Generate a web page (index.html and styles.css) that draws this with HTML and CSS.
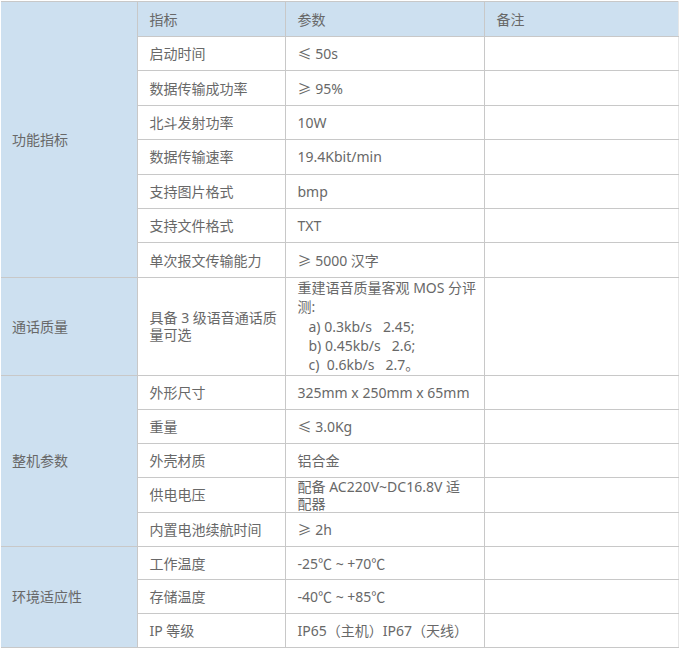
FILE: index.html
```html
<!DOCTYPE html>
<html lang="zh">
<head>
<meta charset="utf-8">
<link rel="stylesheet" href="styles.css">
</head>
<body>
<table class="spec">
  <colgroup>
    <col class="c1"><col class="c2"><col class="c3"><col class="c4">
  </colgroup>
  <tr class="head">
    <td class="group" rowspan="8">功能指标</td>
    <td class="th">指标</td><td class="th">参数</td><td class="th">备注</td>
  </tr>
  <tr class="r1"><td>启动时间</td><td><span class="sym">≤</span> 50s</td><td></td></tr>
  <tr class="r1"><td>数据传输成功率</td><td><span class="sym">≥</span> 95%</td><td></td></tr>
  <tr class="r1"><td>北斗发射功率</td><td>10W</td><td></td></tr>
  <tr class="r1"><td>数据传输速率</td><td>19.4Kbit/min</td><td></td></tr>
  <tr class="r1"><td>支持图片格式</td><td>bmp</td><td></td></tr>
  <tr class="r1"><td>支持文件格式</td><td>TXT</td><td></td></tr>
  <tr class="r1"><td>单次报文传输能力</td><td><span class="sym">≥</span> 5000 汉字</td><td></td></tr>
  <tr class="call">
    <td class="group">通话质量</td>
    <td class="wrap">具备 3 级语音通话质<br>量可选</td>
    <td class="mos">
      <div>重建语音质量客观 MOS 分评<br>测:</div>
      <div class="ind">a) 0.3kb/s &nbsp; 2.45;</div>
      <div class="ind">b) 0.45kb/s &nbsp; 2.6;</div>
      <div class="ind">c) &nbsp;0.6kb/s &nbsp; 2.7。</div>
    </td>
    <td></td>
  </tr>
  <tr class="r2">
    <td class="group" rowspan="5">整机参数</td>
    <td>外形尺寸</td><td>325mm x 250mm x 65mm</td><td></td>
  </tr>
  <tr class="r2"><td>重量</td><td><span class="sym">≤</span> 3.0Kg</td><td></td></tr>
  <tr class="r2"><td>外壳材质</td><td>铝合金</td><td></td></tr>
  <tr class="r2"><td>供电电压</td><td class="wrap">配备 AC220V~DC16.8V 适<br>配器</td><td></td></tr>
  <tr class="r2"><td>内置电池续航时间</td><td><span class="sym">≥</span> 2h</td><td></td></tr>
  <tr class="r3">
    <td class="group" rowspan="3">环境适应性</td>
    <td>工作温度</td><td>-25<span class="sym">℃</span> ~ +70<span class="sym">℃</span></td><td></td>
  </tr>
  <tr class="r3"><td>存储温度</td><td>-40<span class="sym">℃</span> ~ +85<span class="sym">℃</span></td><td></td></tr>
  <tr class="r3"><td>IP 等级</td><td>IP65（主机）IP67（天线）</td><td></td></tr>
</table>
</body>
</html>
```

FILE: styles.css
```css
html, body {
  margin: 0;
  padding: 0;
  background: #ffffff;
}
body {
  font-family: "Noto Sans", "Noto Sans CJK SC", sans-serif;
  font-size: 14px;
  color: #686868;
}
.spec {
  margin: 1px 0 0 1px;
  width: 677px;
  border-collapse: collapse;
  table-layout: fixed;
}
.c1 { width: 136px; }
.c2 { width: 148px; }
.c3 { width: 199px; }
.c4 { width: 194px; }
.spec td {
  border: 1px solid #c8c8c8;
  padding: 0 2px 0 12px;
  vertical-align: middle;
  line-height: 17px;
  text-align: left;
  white-space: nowrap;
}
.spec td.group {
  background: #cde0f0;
  border-left: none;
  padding-left: 11px;
}
.spec td.th {
  background: #cde0f0;
}
.spec td:last-child {
  border-right: 1px solid #e6e6e6;
}
.head { height: 35px; }
.r1 { height: 34.4px; }
.r2 { height: 34px; }
.r3 { height: 33.7px; }
.call { height: 98px; }
.wrap { line-height: 17px; }
.spec td.mos {
  line-height: 19.4px;
  padding-top: 0;
  padding-bottom: 0;
}
.ind { padding-left: 11px; }
.sym {
  font-family: "Noto Sans CJK SC", sans-serif;
}
```
